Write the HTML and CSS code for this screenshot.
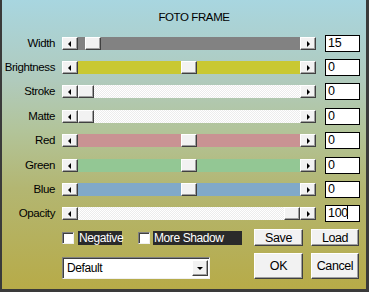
FILE: index.html
```html
<!DOCTYPE html>
<html lang="en">

<head>
    <meta charset="UTF-8">
    <title>Foto Frame</title>
    <link rel="stylesheet" href="styles.css">
</head>

<body>
    <div class="window">
        <div class="title">FOTO FRAME</div>

        <div class="rows">
            <div class="row">
                <span class="label">Width</span>
                <div class="slider">
                    <span class="arrow left"></span>
                    <div class="track gray"><span class="thumb" style="left: 7px"></span></div>
                    <span class="arrow right"></span>
                </div>
                <span class="value">15</span>
            </div>
            <div class="row">
                <span class="label">Brightness</span>
                <div class="slider">
                    <span class="arrow left"></span>
                    <div class="track yellow"><span class="thumb" style="left: 103px"></span></div>
                    <span class="arrow right"></span>
                </div>
                <span class="value">0</span>
            </div>
            <div class="row">
                <span class="label">Stroke</span>
                <div class="slider">
                    <span class="arrow left"></span>
                    <div class="track white"><span class="thumb" style="left: 0px"></span></div>
                    <span class="arrow right"></span>
                </div>
                <span class="value">0</span>
            </div>
            <div class="row spaced">
                <span class="label">Matte</span>
                <div class="slider">
                    <span class="arrow left"></span>
                    <div class="track white"><span class="thumb" style="left: 0px"></span></div>
                    <span class="arrow right"></span>
                </div>
                <span class="value">0</span>
            </div>
            <div class="row">
                <span class="label">Red</span>
                <div class="slider">
                    <span class="arrow left"></span>
                    <div class="track red"><span class="thumb" style="left: 103px"></span></div>
                    <span class="arrow right"></span>
                </div>
                <span class="value">0</span>
            </div>
            <div class="row spaced">
                <span class="label">Green</span>
                <div class="slider">
                    <span class="arrow left"></span>
                    <div class="track green"><span class="thumb" style="left: 103px"></span></div>
                    <span class="arrow right"></span>
                </div>
                <span class="value">0</span>
            </div>
            <div class="row">
                <span class="label">Blue</span>
                <div class="slider">
                    <span class="arrow left"></span>
                    <div class="track blue"><span class="thumb" style="left: 103px"></span></div>
                    <span class="arrow right"></span>
                </div>
                <span class="value">0</span>
            </div>
            <div class="row">
                <span class="label">Opacity</span>
                <div class="slider">
                    <span class="arrow left"></span>
                    <div class="track white"><span class="thumb" style="left: 206px"></span></div>
                    <span class="arrow right"></span>
                </div>
                <span class="value">100<span class="caret"></span></span>
            </div>
        </div>

        <div class="bottom">
            <div class="options">
                <div class="checks">
                    <span class="checkbox"></span>
                    <span class="check-label negative">Negative</span>
                    <span class="checkbox second"></span>
                    <span class="check-label shadow">More Shadow</span>
                </div>
                <div class="select">
                    <span class="select-text">Default</span>
                    <span class="select-btn"></span>
                </div>
            </div>
            <div class="buttons">
                <button class="small">Save</button>
                <button class="small">Load</button>
                <button class="big">OK</button>
                <button class="big">Cancel</button>
            </div>
        </div>
    </div>
</body>

</html>
```

FILE: styles.css
```css
body {
    margin: 0;
}

.window {
    width: 369px;
    height: 292px;
    box-sizing: border-box;
    border-left: 2px solid #3a3a3a;
    border-right: 3px solid #3a3a3a;
    border-bottom: 3px solid #3a3a3a;
    background: linear-gradient(to bottom, #a8d6e0 0%, #b0cabc 28%, #b2c49a 45%, #b3b672 65%, #b7ab48 100%);
    font-family: "Liberation Sans", Arial, sans-serif;
    font-size: 11.5px;
    letter-spacing: -0.4px;
    color: #000;
}

.title {
    height: 35px;
    box-sizing: border-box;
    padding: 11px 0 0 20px;
    line-height: 13px;
    text-align: center;
}

.rows {
    display: flex;
    flex-direction: column;
    gap: 11px;
}

.row {
    display: grid;
    grid-template-columns: 53px 254px 35px;
    height: 13px;
    align-items: center;
}

.row.spaced {
    margin-top: 1px;
}

.label {
    text-align: right;
    line-height: 13px;
}

.slider {
    display: flex;
    height: 13px;
    margin-left: 7px;
    margin-right: -7px;
}

.arrow,
.thumb {
    box-sizing: border-box;
    width: 16px;
    height: 13px;
    background: #f2f2f2;
    border: 1px solid;
    border-color: #fff #404040 #404040 #fff;
    box-shadow: inset -1px -1px #a0a0a0;
}

.arrow {
    display: flex;
    align-items: center;
    justify-content: center;
    flex: none;
}

.arrow::before {
    content: "";
    width: 0;
    height: 0;
    border-top: 3px solid transparent;
    border-bottom: 3px solid transparent;
}

.arrow.left::before {
    border-right: 3px solid #000;
    margin-left: -1px;
}

.arrow.right::before {
    border-left: 3px solid #000;
}

.track {
    flex: 1;
    position: relative;
}

.thumb {
    position: absolute;
    top: 0;
}

.gray {
    background: #828282;
}

.yellow {
    background: #c9c832;
}

.white {
    background: repeating-conic-gradient(#fff 0 25%, #ececec 0 50%) 0 0 / 2px 2px;
}

.red {
    background: #c99393;
}

.green {
    background: #93c794;
}

.blue {
    background: #81a9c9;
}

.value {
    box-sizing: border-box;
    height: 17px;
    margin-left: 16px;
    margin-right: -16px;
    padding-left: 2px;
    line-height: 15px;
    font-size: 12.5px;
    letter-spacing: -0.3px;
    background: #fff;
    border: 1px solid #000;
}

.caret {
    display: inline-block;
    width: 1px;
    height: 13px;
    margin-left: -1px;
    vertical-align: -2px;
    background: #000;
}

.bottom {
    display: flex;
    margin-top: 11px;
    padding-left: 60px;
}

.options {
    width: 180px;
    margin-right: 12px;
}

.checks {
    display: flex;
    align-items: center;
    height: 17px;
}

.checkbox {
    box-sizing: border-box;
    width: 12px;
    height: 12px;
    background: #fff;
    border: 1px solid;
    border-color: #808080 #f0f0f0 #f0f0f0 #808080;
    box-shadow: inset 1px 1px #404040;
}

.checkbox.second {
    margin-left: 16px;
}

.check-label {
    height: 14px;
    line-height: 14px;
    background: #2a2a2a;
    color: #fff;
    font-size: 12px;
    padding-left: 1px;
    box-sizing: border-box;
}

.negative {
    width: 44px;
    margin-left: 4px;
}

.shadow {
    width: 89px;
    margin-left: 3px;
}

.select {
    display: flex;
    align-items: center;
    justify-content: space-between;
    box-sizing: border-box;
    width: 148px;
    height: 22px;
    margin-top: 11px;
    padding: 0 1px 0 4px;
    background: #fff;
    border: 1px solid;
    border-color: #808080 #f0f0f0 #f0f0f0 #808080;
    box-shadow: inset 1px 1px #404040;
    font-size: 12px;
}

.select-btn {
    box-sizing: border-box;
    width: 16px;
    height: 16px;
    display: flex;
    align-items: center;
    justify-content: center;
    background: #f2f2f2;
    border: 1px solid;
    border-color: #fff #404040 #404040 #fff;
    box-shadow: inset -1px -1px #a0a0a0;
}

.select-btn::before {
    content: "";
    width: 0;
    height: 0;
    border-left: 3px solid transparent;
    border-right: 3px solid transparent;
    border-top: 3px solid #000;
}

.buttons {
    display: grid;
    grid-template-columns: 49px 48px;
    grid-template-rows: 17px 26px;
    column-gap: 8px;
    row-gap: 7px;
}

button {
    box-sizing: border-box;
    padding: 0;
    font-family: "Liberation Sans", Arial, sans-serif;
    font-size: 12.5px;
    letter-spacing: -0.4px;
    color: #000;
    background: #f2f2f2;
    border: 1px solid;
    border-color: #fff #404040 #404040 #fff;
    box-shadow: inset -1px -1px #a0a0a0;
    border-radius: 0;
}
```
